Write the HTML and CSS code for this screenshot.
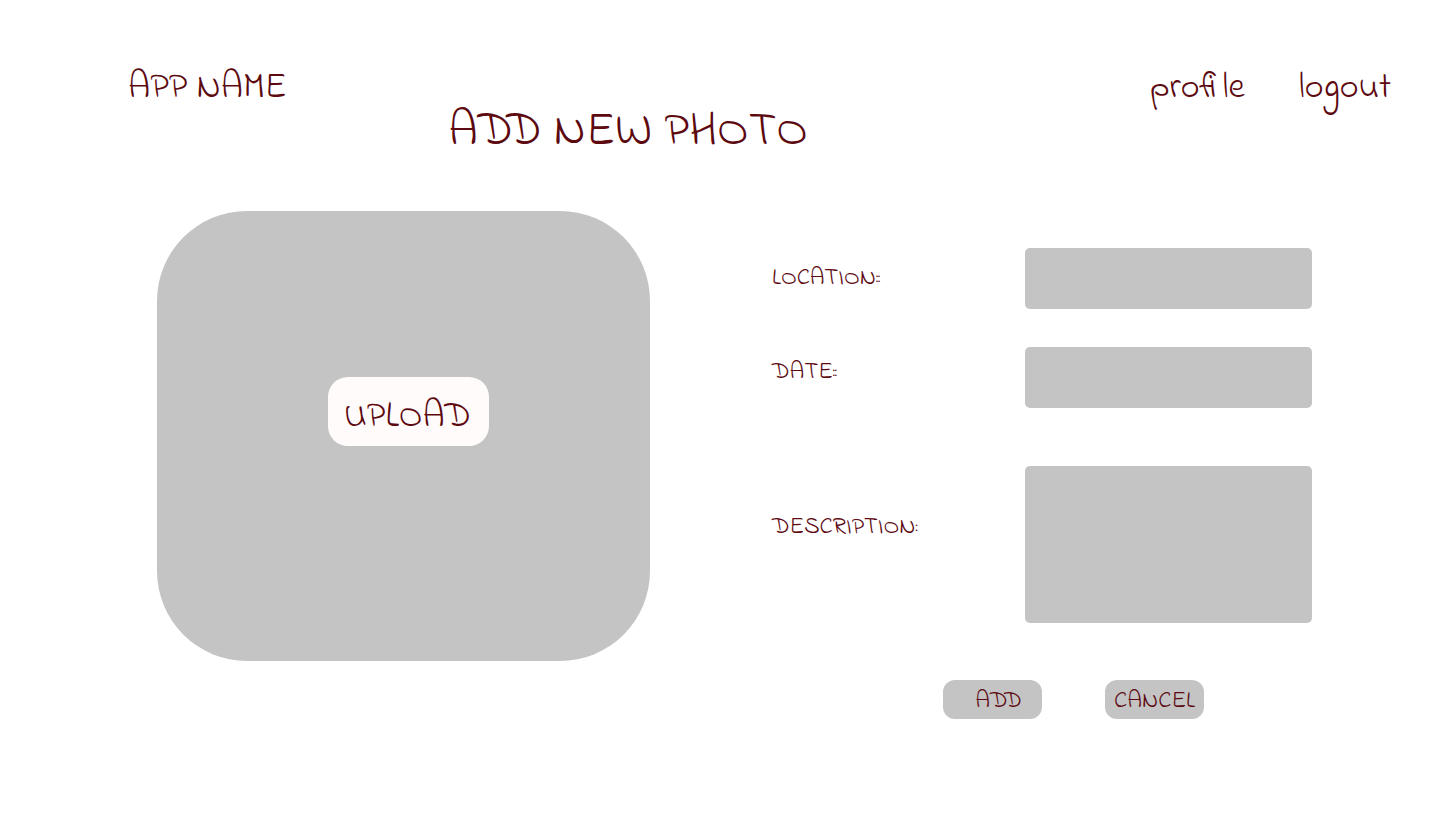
FILE: index.html
```html
<!DOCTYPE html>
<html lang="en">
<head>
  <meta charset="utf-8">
  <meta name="viewport" content="width=device-width, initial-scale=1">
  <title>Add new photo</title>
  <link rel="stylesheet" href="styles.css">
</head>
<body>
  <header class="site-header">
    <a class="brand" href="#">APP NAME</a>
    <nav class="site-nav">
      <a href="#">profile</a>
      <a href="#">logout</a>
    </nav>
  </header>
  <main>
    <h1 class="page-title">ADD NEW PHOTO</h1>
    <form class="photo-form">
      <div class="photo-drop">
        <button class="upload" type="button">UPLOAD</button>
      </div>
      <div class="details">
        <div class="field">
          <label for="location">LOCATION::</label>
          <input id="location" type="text">
        </div>
        <div class="field field-date">
          <label for="date">DATE::</label>
          <input id="date" type="text">
        </div>
        <div class="field field-description">
          <label for="description">DESCRIPTION:</label>
          <textarea id="description"></textarea>
        </div>
        <div class="actions">
          <button class="action action-add" type="submit">ADD</button>
          <button class="action" type="button">CANCEL</button>
        </div>
      </div>
    </form>
  </main>
</body>
</html>
```

FILE: styles.css
```css
* {
  box-sizing: border-box;
}

body {
  margin: 0;
  background: #fff;
  color: #5c0910;
  font-family: "Indie Flower", Lato, sans-serif;
  font-weight: 400;
}

a {
  color: inherit;
  text-decoration: none;
}

button,
input,
textarea {
  margin: 0;
  border: 0;
  color: inherit;
  font: inherit;
}

button {
  cursor: pointer;
}

.site-header {
  display: flex;
  justify-content: space-between;
  padding: 65px 49px 0 128px;
  font-size: 36px;
  line-height: 48px;
}

.site-nav {
  display: flex;
  gap: 54px;
}

.page-title {
  margin: 0;
  padding-right: 184px;
  font-size: 48px;
  font-weight: 400;
  line-height: 38px;
  text-align: center;
}

.photo-form {
  display: grid;
  grid-template-columns: 493fr 540fr;
  column-gap: 122px;
  align-items: start;
  padding: 60px 128px 40px 157px;
}

.photo-drop {
  display: flex;
  justify-content: center;
  min-height: 450px;
  padding: 166px 0 0 10px;
  border-radius: 90px;
  background: #c4c4c4;
}

.upload {
  height: 69px;
  padding: 12px 18px 0 16px;
  border-radius: 20px;
  background: #fffbfb;
  font-size: 36px;
}

.details {
  padding-top: 37px;
}

.field {
  display: grid;
  grid-template-columns: 253fr 287fr;
  font-size: 24px;
  line-height: 28px;
}

.field label {
  padding-top: 17px;
}

.field input,
.field textarea {
  width: 100%;
  height: 61px;
  padding: 12px;
  border-radius: 5px;
  background: #c4c4c4;
}

.field-date {
  margin-top: 38px;
}

.field-date label {
  padding-top: 12px;
}

.field-description {
  margin-top: 58px;
}

.field-description label {
  padding-top: 48px;
}

.field textarea {
  display: block;
  height: 157px;
  resize: none;
}

.actions {
  display: flex;
  justify-content: flex-end;
  gap: 63px;
  margin-top: 57px;
  padding-right: 108px;
}

.action {
  width: 99px;
  height: 39px;
  padding: 4px 0 0;
  border-radius: 12px;
  background: #c4c4c4;
  font-size: 24px;
}

.action-add {
  padding-left: 12px;
}
```
